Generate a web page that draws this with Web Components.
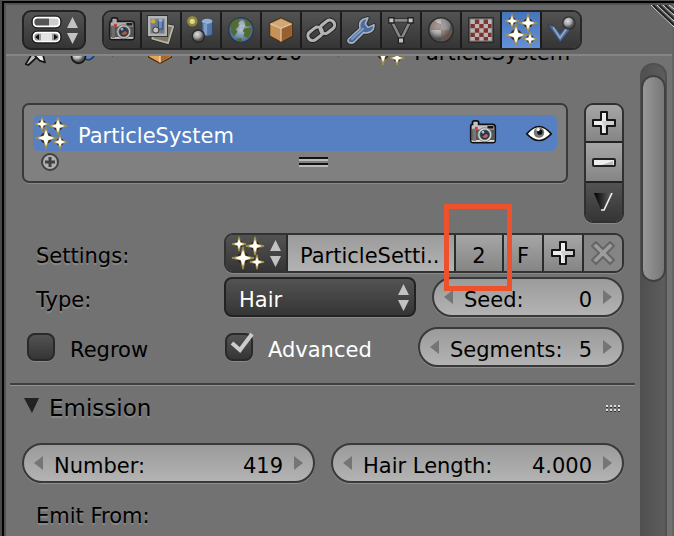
<!DOCTYPE html>
<html lang="en">
<head>
<meta charset="utf-8">
<title>Properties</title>
<style>
  html, body { height: 100%; }
  body { margin: 0; overflow: hidden; background: #727272; color: #000; font: 21px/24px "DejaVu Sans", sans-serif; }
</style>
</head>
<body>
<bl-editor>
  <bl-header slot="header"></bl-header>
  <bl-breadcrumb></bl-breadcrumb>
  <bl-list></bl-list>
  <bl-row label="Settings:"><bl-datablock></bl-datablock></bl-row>
  <bl-row label="Type:" class="next">
    <bl-menu label="Type" value="Hair"></bl-menu>
    <bl-number label="Seed:" value="0"></bl-number>
  </bl-row>
  <bl-row class="checks">
    <bl-check slot="lead" label="Regrow"></bl-check>
    <bl-check label="Advanced" checked></bl-check>
    <bl-number class="wide" label="Segments:" value="5"></bl-number>
  </bl-row>
  <bl-section label="Emission">
    <bl-number label="Number:" value="419"></bl-number>
    <bl-number label="Hair Length:" value="4.000"></bl-number>
    <span slot="after">Emit From:</span>
  </bl-section>
</bl-editor>
<script>
const star = (x, y, r) => {
  const p = (q, m) => `M${x} ${y - q}L${x + m} ${y - m}L${x + q} ${y}L${x + m} ${y + m}L${x} ${y + q}L${x - m} ${y + m}L${x - q} ${y}L${x - m} ${y - m}Z`;
  return `<circle cx="${x}" cy="${y}" r="${r * 0.52}" fill="#321508" opacity=".85"/><path d="${p(r, r * 0.17)}" fill="#f3e6a8" stroke="#a08d45" stroke-width="1.5"/><path d="${p(r * 0.75, r * 0.2)}" fill="#fff"/>`;
};
const camera = `<path d="M2 8q0-2 2-2V4q0-2 2-2h3q2 0 2 2v2h16q3 0 3 3v15q0 3-3 3H5q-3 0-3-3Z" fill="#c4c4c4" stroke="#111" stroke-width="2"/><path d="M3 12h26v12H3Z" fill="#555"/><path d="M3 24h26v2H3Z" fill="#ddd"/><path d="M4 11h4v14H4Z" fill="#777"/><path d="M21 8h7v3h-7Z" fill="#161616"/><rect x="7" y="9" width="3" height="3" fill="#f22"/><circle cx="18" cy="18" r="8" fill="#ddd" stroke="#777"/><circle cx="18" cy="18" r="5.5" fill="#26364d" stroke="#555"/><path d="M15 20a4 4 0 0 0 7-1q-2-3-4-1t-3 2Z" fill="#bd6248"/><circle cx="16" cy="15" r="1.5" fill="#a6c1e5"/>`;
const ICONS = {
  particles: star(7, 7, 7) + star(23, 9, 9) + star(11, 21, 11) + star(25, 25, 7),
  camera,
  toggles: `<rect x="2" y="3" width="27" height="10" rx="4" fill="#ccc"/><path d="M6 4h12v8H6q-3 0-3-3V7q0-3 3-3Z" fill="#555"/><rect x="2.500" y="3.500" width="26" height="9" rx="4" fill="none" stroke="#fff" stroke-width="1.8"/><rect x="1" y="2" width="29" height="12" rx="5" fill="none" stroke="#111"/><rect x="2.500" y="18.500" width="26" height="9" rx="4" fill="#999" stroke="#fff" stroke-width="1.8"/><rect x="1" y="17" width="29" height="12" rx="5" fill="none" stroke="#111"/><path d="M8 20v6l-4-3ZM23 20v6l4-3Z" fill="#111"/><path d="M10 19h11v8H10Z" fill="#e4e4e4"/>`,
  layers: `<path d="M10 8l20 4-6 19-18-5Z" fill="#8d8771" stroke="#222" stroke-width="3.500"/><path d="M10 8l20 4-6 19-18-5Z" fill="#8d8771" stroke="#d5d2c0" stroke-width="2"/><rect x="0" y="-1" width="24" height="25" fill="#222"/><rect x="1" y="0" width="22" height="23" fill="#ccc"/><rect x="4" y="3" width="16" height="17" fill="#7d8896"/><circle cx="7" cy="6" r="2.500" fill="#eac438"/><path d="M13 5h5v10h-5Z" fill="#6f9bdd" stroke="#294570"/><ellipse cx="15.500" cy="5" rx="2.500" ry="1.500" fill="#abcaff"/><circle cx="10" cy="16" r="3.500" fill="#ddd" stroke="#222"/>`,
  scene: `<circle cx="6" cy="6" r="6" fill="#d5c92f" opacity=".6"/><circle cx="6" cy="6" r="3" fill="#fff8a0"/><path d="M17 6v15q6 4 12 0V6Z" fill="#5882ba" stroke="#29466d"/><ellipse cx="23" cy="6" rx="6" ry="3" fill="#a5c8f2"/><path d="M19 9h4v13h-4Z" fill="#8eb4e5"/><circle cx="13" cy="23" r="7" fill="url(#ball)" stroke="#222" stroke-width="1.5"/>`,
  world: `<circle cx="16" cy="16" r="14" fill="url(#sea)" stroke="#23364f" stroke-width="1.5"/><path d="M3 12q2-7 9-9l4 2-3 3 2 2-5 5 2 3-4 5-4-5 1-4ZM20 4q5 1 8 7l-6 1-3-4ZM20 14l8-1q1 6-4 12l-5-2 1-4-2-2ZM10 26l6-1 2 4q-5 1-8-3Z" fill="#55742f"/><circle cx="17" cy="9" r="4" fill="#fff" opacity=".4"/>`,
  cube: `<path d="M16 2l13 6v15l-13 7-13-7V8Z" fill="#e5a45c" stroke="#4b2e17" stroke-width="1.5"/><path d="M4 9l12 5 12-5-12-5Z" fill="#f0bd82"/><path d="M16 14l12-5v13l-12 7Z" fill="#a9682a"/><path d="M4 9l12 5 12-5M16 14v15" fill="none" stroke="#fbe0b9" stroke-width="1.5"/>`,
  link: `<g fill="none"><g stroke="#222" stroke-width="6"><rect x="0" y="15" width="18" height="11" rx="5.500" transform="rotate(-38 9 20)"/><rect x="14" y="7" width="18" height="11" rx="5.500" transform="rotate(-38 23 12)"/></g><g stroke="#ccc" stroke-width="3.500"><rect x="0" y="15" width="18" height="11" rx="5.500" transform="rotate(-38 9 20)"/><rect x="14" y="7" width="18" height="11" rx="5.500" transform="rotate(-38 23 12)"/></g></g>`,
  wrench: `<g stroke-linejoin="round"><path d="M2 26L15 14q-2-7 3-10l6-2-3 7 3 4 7-3q0 6-4 8t-8 1L8 30q-3 2-6 0-2-2 0-4Z" fill="#5479ac" stroke="#1f2937" stroke-width="4"/><path d="M2 26L15 14q-2-7 3-10l6-2-3 7 3 4 7-3q0 6-4 8t-8 1L8 30q-3 2-6 0-2-2 0-4Z" fill="#4d76b0" stroke="#c1cbd9" stroke-width="1.8"/></g><path d="M5 27L19 14" stroke="#8fb3e2" stroke-width="2"/>`,
  mesh: `<path d="M5 5h22L16 27Z" fill="none" stroke="#252525" stroke-width="5"/><path d="M5 5h22L16 27Z" fill="none" stroke="#969696" stroke-width="3"/><g fill="#e0e0e0" stroke="#191919" stroke-width="1.5"><path d="M2 2h6v6H2ZM24 2h6v6h-6ZM13 25h6v6h-6Z"/></g>`,
  material: `<circle cx="16" cy="16" r="14" fill="url(#ball)"/><path d="M16 16h14a14 14 0 0 1-14 14ZM16 16H2q0-8 6-11 4 3 8 4Z" fill="#875c51" opacity=".5"/><path d="M16 3q7 0 11 6l-2 7h-9Z" fill="#999" opacity=".6"/><circle cx="16" cy="16" r="14" fill="none" stroke="#262626" stroke-width="1.7"/>`,
  texture: `<rect x="2" y="2" width="28" height="28" fill="#8a8a8a" stroke="#222" stroke-width="1.5"/><rect x="4" y="4" width="24" height="24" fill="#d0d0d0"/><path d="M9 4h5v5H9ZM19 4h5v5h-5ZM4 9h5v5H4ZM14 9h5v5h-5ZM24 9h4v5h-4ZM9 14h5v5H9ZM19 14h5v5h-5ZM4 19h5v5H4ZM14 19h5v5h-5ZM24 19h4v5h-4ZM9 24h5v4H9ZM19 24h5v4h-5Z" fill="#8e2f28"/>`,
  physics: `<path d="M1 10l14 20 13-16-6-3-7 9-7-9Z" fill="#52729f" stroke="#273c5c"/><path d="M7 13l8 12 8-11" fill="none" stroke="#a3bfe5" stroke-width="2"/><circle cx="25" cy="8" r="7" fill="url(#ball)" stroke="#292929" stroke-width="1.5"/>`,
  eye: `<path d="M2 17q14-17 28 0-14 15-28 0Z" fill="#fff" stroke="#111" stroke-width="1.8"/><circle cx="16" cy="15.500" r="6" fill="#777"/><circle cx="17" cy="15" r="3" fill="#111"/><circle cx="15" cy="12" r="2" fill="#eee"/>`,
  plus: `<path d="M13 5h6v8h8v6h-8v8h-6v-8H5v-6h8Z" fill="#eee" stroke="#161616" stroke-width="2" stroke-linejoin="round"/><path d="M14 14h12v4h-8v8" fill="#d0d0d0"/>`,
  minus: `<rect x="5" y="13" width="22" height="7" rx="1" fill="#eee" stroke="#222" stroke-width="2"/><path d="M14 19l11-4v4Z" fill="#bbb"/>`,
  cross: `<path d="M9 5l7 7 7-7 4 4-7 7 7 7-4 4-7-7-7 7-4-4 7-7-7-7Z" fill="#9c9c9c" stroke="#666" stroke-width="2" stroke-linejoin="round"/>`,
  down: `<path d="M6 7h18l-8 17h-3Z" fill="url(#dark)"/><path d="M24 7l-8 17h-3" fill="none" stroke="#eee" stroke-width="1.7"/>`,
  arrows: `<path d="M1 12L6.500 1L12 12ZM1 17h11L6.500 28Z" fill="#c2c2c2"/>`,
  pin: `<g stroke-linejoin="round"><path d="M2 31l9-15 6 5-12 11Z" fill="#bbb" stroke="#161616" stroke-width="2"/><path d="M7 18l9-6V2h10v12l-5 4 3 11-6-2-6-6Z" fill="#eee" stroke="#161616" stroke-width="2"/></g>`,
  linked: `<circle cx="23" cy="19" r="7" fill="#5a83bb" stroke="#253b61" stroke-width="2"/><circle cx="12" cy="22" r="8" fill="url(#ball)" stroke="#161616" stroke-width="2"/>`
};
const defs = `<defs><radialGradient id="ball" cx=".4" cy=".35"><stop stop-color="#fff"/><stop offset=".6" stop-color="#bbb"/><stop offset="1" stop-color="#555"/></radialGradient><radialGradient id="sea"><stop stop-color="#cfe2f4"/><stop offset="1" stop-color="#476fa6"/></radialGradient><linearGradient id="dark"><stop stop-color="#000"/><stop offset="1" stop-color="#666"/></linearGradient></defs>`;
const BASE = `<style>
  *{box-sizing:border-box} :host{display:block;box-sizing:border-box;min-width:0}
  button,input,select{font:inherit;color:inherit;margin:0;border:0;border-radius:0;background:none;padding:0;outline:0;min-width:0}
  .dark{background:linear-gradient(#535353,#353535);color:#fff}
  .light{background:linear-gradient(#9b9b9b,#b3b3b3)}
  .tool{background:linear-gradient(#a6a6a6,#858585)}
</style>`;
const define = (name, render) => customElements.define(name, class extends HTMLElement {
  constructor() { super(); this.attachShadow({ mode: 'open' }); }
  connectedCallback() { this.shadowRoot.innerHTML = BASE + render(this); }
});
const attr = (el, n) => el.getAttribute(n) || '';

define('bl-icon', el => {
  const n = attr(el, 'name'), arrows = n === 'arrows';
  return `<style>:host{flex:none;width:${arrows ? 13 : 32}px;height:${arrows ? 29 : 32}px}:host([small]){width:28px;height:28px}svg{display:block;width:100%;height:100%;overflow:visible}</style><svg viewBox="0 0 ${arrows ? '13 29' : '32 32'}" aria-hidden="true">${defs}${ICONS[n]}</svg>`;
});

define('bl-editor', () => `<style>
  :host{display:flex;flex-direction:column;height:100vh;overflow:hidden;border-left:2px solid #484848;border-top:1px solid #555;background:#727272}
  .frame{flex:1;min-height:0;display:flex;flex-direction:column;border:solid #000;border-width:2px 0 0 2px}
  .inner{flex:1;min-height:0;display:flex;flex-direction:column;border:2px solid #535353;border-right-color:#656565;border-bottom:0}
  .body{flex:1;min-height:0;display:flex}
  main{flex:1;min-width:0;overflow:hidden}
  .bar{flex:none;width:27px;margin:7px 5px 0 0;border:2px solid #505050;border-bottom:0;border-radius:13px 13px 0 0;background:linear-gradient(90deg,#505050,#5d5d5d);padding-top:10px}
  .thumb{height:207px;margin:0 -1px;border:2px solid #404040;border-radius:13px;background:linear-gradient(90deg,#979797,#777)}
</style><div class="frame"><div class="inner"><slot name="header"></slot><div class="body"><main><slot></slot></main><div class="bar"><div class="thumb"></div></div></div></div></div>`);

define('bl-header', () => {
  const tabs = [['camera','Render'],['layers','Render layers'],['scene','Scene'],['world','World'],['cube','Object'],['link','Constraints'],['wrench','Modifiers'],['mesh','Data'],['material','Material'],['texture','Texture'],['particles','Particles'],['physics','Physics']];
  return `<style>
  :host{flex:none;display:flex;align-items:start;gap:16px;height:51px;padding:5px 0 0 16px;background:#686868;border-bottom:2px solid #858585;position:relative;z-index:1}
  .type{width:64px;height:40px;border:2px solid #222;border-radius:9px;display:flex;align-items:center;justify-content:space-between;padding:0 5px 0 7px}
  nav{display:flex;border:2px solid #282828;border-radius:9px;overflow:hidden;height:40px}
  nav button{width:40px;height:36px;border-right:2px solid #1c1c1c;display:grid;place-items:center}
  nav button:first-child,nav button:last-child{width:38px} nav button:last-child{border:0}
  nav bl-icon{opacity:.82} nav .on{background:linear-gradient(#4674b9,#6490d8)} .on bl-icon{opacity:1}
  .corner{position:absolute;right:-2px;top:0;width:24px;height:24px}
  </style><button class="type dark" aria-label="Editor type"><bl-icon name="toggles"></bl-icon><bl-icon name="arrows"></bl-icon></button>
  <nav>${tabs.map(([i, t]) => `<button class="${i === 'particles' ? 'on' : 'dark'}" aria-label="${t}"><bl-icon ${i === 'particles' ? '' : 'small'} name="${i}"></bl-icon></button>`).join('')}</nav>
  <svg class="corner" viewBox="0 0 24 24" aria-hidden="true"><g fill="none" stroke-width="1"><path stroke="#ddd" d="M1 0l23 22M7 0l17 16M13 0l11 10M19 0l5 4"/><path stroke="#222" stroke-width="2" d="M3 0l21 20M9 0l15 14M15 0l9 8"/></g></svg>`;
});

define('bl-breadcrumb', () => `<style>
  :host{display:flex;align-items:end;height:9px;padding-left:18px}
  span{line-height:24px} .a{margin-left:16px} .sep{flex:none;width:6px;height:22px;fill:#333}
  .s1{margin:0 28px 0 16px} .name{margin-left:14px} .s2{margin:0 28px 0 36px} .last{margin-left:10px}
</style><bl-icon name="pin" small></bl-icon><bl-icon class="a" name="linked" small></bl-icon><svg class="sep s1"><path d="M0 0l6 7-6 7Z"/></svg><bl-icon name="cube" small></bl-icon><span class="name">pieces.020</span><svg class="sep s2"><path d="M0 0l6 7-6 7Z"/></svg><bl-icon name="particles"></bl-icon><span class="last">ParticleSystem</span>`);

define('bl-list', () => `<style>
  :host{display:flex;align-items:start;gap:16px;margin:38px 16px 0 16px}
  .box{flex:1;min-width:0;height:80px;border:2px solid #393939;border-radius:7px;background:#808080;padding:10px 9px 0;box-shadow:0 1px #888}
  .row{display:flex;align-items:center;height:36px;border-radius:6px;background:#5680c2;color:#fff;padding:0 4px 0 2px}
  .name{flex:1;padding:5px 0 0 11px}
  .foot{display:grid;grid-template-columns:1fr auto 1fr;align-items:center;height:22px;padding-left:8px}
  .add{width:18px;height:18px;border:2px solid #414141;border-radius:9px;background:#b0b0b0;display:grid;place-items:center}
  .add svg{display:block}
  .grip{width:29px;height:10px;margin-left:28px;background:linear-gradient(#111 2px,#bbb 2px 4px,transparent 4px 6px,#111 6px 8px,#bbb 8px)}
  .side{flex:none;display:flex;flex-direction:column;width:40px;border:2px solid #303030;border-radius:9px;overflow:hidden;box-shadow:0 1px #888}
  .side button{height:40px;border-bottom:2px solid #222;display:grid;place-items:center}
  .side button:first-child,.side button:last-child{height:38px}.side button:last-child{border:0}
  .gap{width:28px}
</style><div class="box"><div class="row"><bl-icon name="particles"></bl-icon><span class="name">ParticleSystem</span><bl-icon name="camera" small></bl-icon><span class="gap"></span><bl-icon name="eye" small></bl-icon></div>
<div class="foot"><button class="add" aria-label="Filter"><svg width="10" height="10"><path d="M5 0v10M0 5h10" stroke="#414141" stroke-width="3"/></svg></button><span class="grip"></span></div></div>
<div class="side"><button class="tool" aria-label="Add"><bl-icon name="plus"></bl-icon></button><button class="tool" aria-label="Remove"><bl-icon name="minus"></bl-icon></button><button class="dark" aria-label="Specials"><bl-icon name="down"></bl-icon></button></div>`);

define('bl-row', el => `<style>
  :host{display:grid;grid-template-columns:1fr 2fr;gap:2px;margin:10px 16px 0 16px}
  :host(.next){margin-top:4px}
  .lead{height:40px;padding:11px 0 0 14px;text-shadow:0 2px 1px #8c8c8c}
  :host(.checks) .lead{padding:0 0 0 5px;text-shadow:none}
  .fields{display:flex;gap:16px;min-width:0}
  ::slotted(*){flex:1} :host(.checks) ::slotted(.wide){flex:0 0 206px}
  :host(.checks) .fields{padding-left:1px}
</style><div class="lead">${attr(el, 'label')}<slot name="lead"></slot></div><div class="fields"><slot></slot></div>`);

define('bl-datablock', () => `<style>
  :host{position:relative}
  .set{display:flex;height:40px;border:2px solid #323232;border-radius:9px;overflow:hidden;box-shadow:0 1px #888}
  button{flex:none;display:grid;place-items:center;width:40px;border-right:2px solid #2b2b2b}
  .pick{width:62px;display:flex;align-items:center;justify-content:space-between;padding:0 4px 0 6px}
  input{flex:1;padding:5px 0 0 12px;border-right:2px solid #2b2b2b}
  .text{padding-top:5px}.users{width:48px}.x{width:38px;border:0;background:#858585}
  .mark{position:absolute;right:112px;top:-29px;width:68px;height:87px;border:5px solid #ee522d;z-index:2;pointer-events:none}
</style><div class="set"><button class="pick dark" aria-label="Browse settings"><bl-icon name="particles"></bl-icon><bl-icon name="arrows"></bl-icon></button><input class="light" aria-label="Settings name" value="ParticleSetti.."><button class="tool text users">2</button><button class="tool text">F</button><button class="tool" aria-label="New"><bl-icon name="plus"></bl-icon></button><button class="x" aria-label="Unlink"><bl-icon name="cross"></bl-icon></button></div><div class="mark"></div>`);

define('bl-menu', el => `<style>
  :host{display:grid;height:40px}
  select{grid-area:1/1;appearance:none;width:100%;height:40px;border:2px solid #222;border-radius:8px;padding:5px 30px 0 13px;box-shadow:0 1px #888}
  bl-icon{grid-area:1/1;place-self:center end;margin-right:6px;pointer-events:none}
</style><select class="dark" aria-label="${attr(el, 'label')}"><option>${attr(el, 'value')}</option></select><bl-icon name="arrows"></bl-icon>`);

define('bl-number', el => `<style>
  .f{display:flex;align-items:center;height:40px;border:2px solid #393939;border-radius:20px;padding:0 10px;box-shadow:0 1px #909090}
  label{flex:none;padding:5px 0 0 11px} input{flex:1;width:0;text-align:right;padding:5px 11px 0 0;height:36px}
  svg{flex:none;fill:#757575}
</style><div class="f light"><svg width="9" height="14"><path d="M9 0v14L0 7Z"/></svg><label for="v">${attr(el, 'label')}</label><input id="v" value="${attr(el, 'value')}"><svg width="9" height="14"><path d="M0 0v14l9-7Z"/></svg></div>`);

define('bl-check', el => `<style>
  label{display:flex;align-items:center;gap:15px;height:40px}
  .b{display:grid;flex:none;width:28px;height:28px}
  input{appearance:none;grid-area:1/1;width:28px;height:28px;border:2px solid #292929;border-radius:8px;box-shadow:0 1px #888}
  svg{grid-area:1/1;overflow:visible;display:none;pointer-events:none} input:checked+svg{display:block}
  .t{padding-top:5px} :host([checked]) .t{color:#fff}
</style><label><span class="b"><input class="dark" type="checkbox" ${el.hasAttribute('checked') ? 'checked' : ''}><svg width="28" height="28"><path d="M7 10l8 7L27 1" fill="none" stroke="#ccc" stroke-width="4"/></svg></span><span class="t">${attr(el, 'label')}</span></label>`);

define('bl-section', el => `<style>
  :host{margin:16px 5px 0 4px;border-top:2px solid #404040}
  .head{display:flex;align-items:center;border-top:1px solid #929292;height:46px;padding:0 15px 0 14px;font-size:23px}
  .head svg{margin-bottom:6px}
  h2{flex:1;margin:0 0 2px;padding:0 0 0 10px;font:inherit;text-shadow:0 2px 1px #8c8c8c}
  .grip{width:14px;height:7px;background:repeating-linear-gradient(90deg,transparent 0 2px,#727272 2px 4px),linear-gradient(#ddd 2px,#333 2px 3px,#727272 3px 4px,#ddd 4px 6px,#333 6px)}
  .row{display:grid;grid-template-columns:1fr 1fr;gap:16px;margin:12px 11px 0 12px}
  .after{padding:21px 0 0 26px;text-shadow:0 2px 1px #8c8c8c}
</style><div class="head"><svg width="15" height="15"><path d="M0 0h15L8 15Z" fill="#222"/></svg><h2>${attr(el, 'label')}</h2><span class="grip"></span></div><div class="row"><slot></slot></div><div class="after"><slot name="after"></slot></div>`);
</script>
</body>
</html>
